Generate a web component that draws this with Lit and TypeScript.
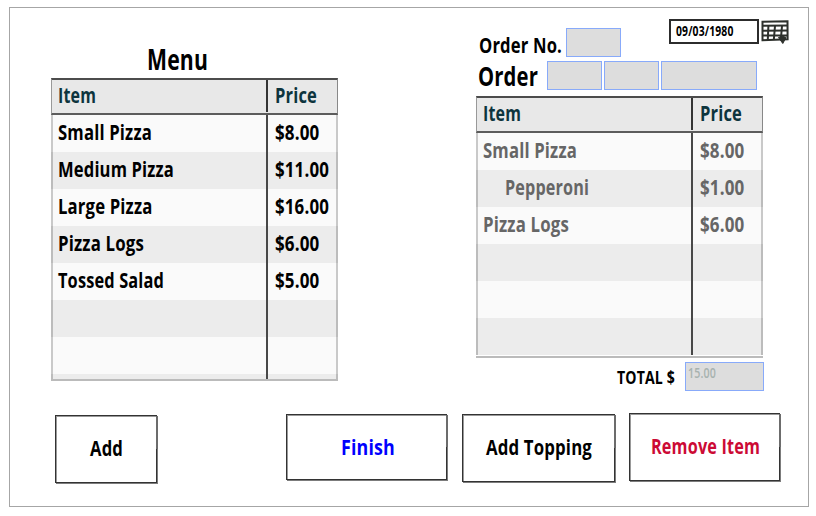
import { LitElement, html, css } from "lit";
import { customElement, property } from "lit/decorators.js";

/** One line of condensed lettering, set to an exact width on a given baseline. */
@customElement("fit-text")
class FitText extends LitElement {
  @property() text = "";
  @property({ type: Number }) w = 50;
  @property({ type: Number }) size = 21.5;
  @property({ type: Number }) weight = 700;

  static styles = css`
    :host { display: block; flex: none; }
    svg { display: block; overflow: visible; }
    text { font-family: "Open Sans", "Noto Sans", sans-serif; fill: currentColor; letter-spacing: 0.2px; }
  `;

  render() {
    const h = Math.round(this.size);
    return html`<svg width=${this.w} height=${h}>
      <text x="0" y=${h - 3} font-size=${this.size} font-weight=${this.weight}
        textLength=${this.w} lengthAdjust="spacingAndGlyphs">${this.text}</text>
    </svg>`;
  }
}

interface Row { item: string; iw: number; price: string; pw: number; sub?: boolean; }

@customElement("item-table")
class ItemTable extends LitElement {
  @property({ attribute: false }) rows: Row[] = [];
  @property({ type: Number }) blanks = 3;

  static styles = css`
    :host { display: flex; flex-direction: column; box-sizing: border-box; width: 287px; overflow: hidden; }
    .head, .row { display: grid; flex: none; box-sizing: border-box; height: 37px; }
    .head { grid-template-columns: 214px 1fr; background: #e8e8e8; color: #0d343d; border-top: 2px solid #4c4c4c; border-bottom: 2px solid #5c5c5c; border-left: 1px solid #999; border-right: 1px solid #888; }
    .body { flex: 1; min-height: 0; overflow: hidden; box-sizing: border-box; border-bottom: 2px solid #bbb; }
    .row { grid-template-columns: 213px 1fr; background: #fafafa; border-left: 2px solid #c9c9c9; border-right: 2px solid #c9c9c9; }
    .row:nth-child(even) { background: #ececec; border-color: #bcbcbc; }
    .name { padding: 6px 0 0 5px; }
    .head .name { padding: 4px 0 0 6px; }
    .name.sub { padding-left: 27px; }
    .price { padding: 6px 0 0 7px; border-left: 2px solid #484848; }
    .head .price { padding-top: 4px; border-color: #333; margin-bottom: 1px; }
  `;

  render() {
    const blanks = Array.from({ length: this.blanks });
    return html`
      <div class="head">
        <div class="name"><fit-text text="Item" w="38"></fit-text></div>
        <div class="price"><fit-text text="Price" w="42"></fit-text></div>
      </div>
      <div class="body">
        ${this.rows.map((r) => html`<div class="row">
          <div class="name ${r.sub ? "sub" : ""}"><fit-text .text=${r.item} .w=${r.iw}></fit-text></div>
          <div class="price"><fit-text .text=${r.price} .w=${r.pw}></fit-text></div>
        </div>`)}
        ${blanks.map(() => html`<div class="row"><div class="name"></div><div class="price"></div></div>`)}
      </div>`;
  }
}

@customElement("app-root")
class AppRoot extends LitElement {
  static styles = css`
    :host { display: block; width: 816px; height: 516px; background: #fff; overflow: hidden; color: #000; }
    .frame { display: flex; flex-direction: column; box-sizing: border-box; width: 800px; height: 500px; margin: 7px 0 0 9px; border: 1px solid #a6a6a6; }
    .top { display: flex; justify-content: space-between; height: 405px; padding: 0 44px 0 41px; box-sizing: border-box; }
    .menu { width: 287px; }
    .menu .title { padding: 37px 0 0 96px; height: 33px; }
    .menu item-table { height: 303px; }
    .order { width: 288px; display: flex; flex-direction: column; }
    .line1 { display: flex; height: 53px; margin-right: -28px; }
    .line1 .no { padding: 26px 0 0 3px; width: 87px; }
    .line1 .field { margin-top: 20px; }
    .line2 { display: flex; height: 35px; gap: 2px; }
    .line2 .lab { width: 69px; padding: 1px 0 0 2px; box-sizing: border-box; }
    .field { box-sizing: border-box; width: 55px; height: 29px; background: #ddd; border: 1px solid #88aafa; flex: none; }
    .wide { width: 96px; }
    .date { box-sizing: border-box; width: 90px; height: 25px; border: 2px solid #2c2c2c; margin: 11px 2px 0 48px; padding: 4px 0 0 5px; }
    .cal { display: block; margin-top: 11px; flex: none; }
    .order item-table { height: 262px; flex: none; }
    .dim { color: #666; }
    .total { display: flex; justify-content: flex-end; gap: 10px; margin-top: 4px; }
    .total > fit-text { margin-top: 6px; }
    .amount { width: 79px; color: #a7b2af; padding: 4px 0 0 2px; }
    .buttons { display: flex; align-items: flex-start; padding-left: 45px; }
    .btn { position: relative; box-sizing: border-box; display: flex; justify-content: center; flex: none; border: 1px solid #333; box-shadow: 1px 1px 0 #7c7c7c, inset 1px 1px 0 #999; }
    .btn::after { content: ""; position: absolute; top: 0; right: -2px; width: 2px; height: 50%; background: #6c6c6c; }
    .add { width: 102px; height: 68px; margin: 2px 129px 0 0; padding-top: 21px; }
    .finish { width: 161px; height: 66px; margin: 1px 15px 0 0; padding: 21px 0 0 2px; color: #0000fe; }
    .topping { width: 153px; height: 68px; margin: 1px 14px 0 0; padding-top: 21px; }
    .remove { width: 151px; height: 68px; padding: 21px 0 0 2px; color: #cc0a35; }
  `;

  private menu: Row[] = [
    { item: "Small Pizza", iw: 94, price: "$8.00", pw: 44.5 },
    { item: "Medium Pizza", iw: 116, price: "$11.00", pw: 54 },
    { item: "Large Pizza", iw: 94.5, price: "$16.00", pw: 54 },
    { item: "Pizza Logs", iw: 86, price: "$6.00", pw: 44.5 },
    { item: "Tossed Salad", iw: 106, price: "$5.00", pw: 44.5 },
  ];

  private order: Row[] = [
    { item: "Small Pizza", iw: 94, price: "$8.00", pw: 44.5 },
    { item: "Pepperoni", iw: 84, price: "$1.00", pw: 44.5, sub: true },
    { item: "Pizza Logs", iw: 86, price: "$6.00", pw: 44.5 },
  ];

  render() {
    return html`<div class="frame">
      <div class="top">
        <div class="menu">
          <div class="title"><fit-text text="Menu" w="61" size="28"></fit-text></div>
          <item-table .rows=${this.menu} .blanks=${3}></item-table>
        </div>
        <div class="order">
          <div class="line1">
            <div class="no"><fit-text text="Order No." w="83"></fit-text></div>
            <div class="field"></div>
            <div class="date"><fit-text text="09/03/1980" w="57.5" size="14"></fit-text></div>
            <svg class="cal" width="28" height="26" viewBox="0 0 28 26" fill="none" stroke="#2d302c">
              <path d="M1.5 2.8 26.5 2.2 26.6 20.3 1.5 21.3Z" stroke-width="2"/>
              <path d="M1 6.8 27 6.6M1 11.8 27 11.6M1 16.6 27 16.4" stroke-width="2"/>
              <path d="M7.4 7 6.8 21M14 7 12.8 21M21 7 19.8 21" stroke-width="2"/>
              <path d="M17.5 18.5 21 17 25 18.5 21.8 24.5Z" fill="#2d302c" stroke-width="1"/>
            </svg>
          </div>
          <div class="line2">
            <div class="lab"><fit-text text="Order" w="60" size="27"></fit-text></div>
            <div class="field"></div><div class="field"></div><div class="field wide"></div>
          </div>
          <item-table class="dim" .rows=${this.order} .blanks=${3}></item-table>
          <div class="total">
            <fit-text text="TOTAL $" w="58" size="18.5"></fit-text>
            <div class="field amount"><fit-text text="15.00" w="28" size="14" weight="600"></fit-text></div>
          </div>
        </div>
      </div>
      <div class="buttons">
        <div class="btn add"><fit-text text="Add" w="33"></fit-text></div>
        <div class="btn finish"><fit-text text="Finish" w="54"></fit-text></div>
        <div class="btn topping"><fit-text text="Add Topping" w="106"></fit-text></div>
        <div class="btn remove"><fit-text text="Remove Item" w="109"></fit-text></div>
      </div>
    </div>`;
  }
}
